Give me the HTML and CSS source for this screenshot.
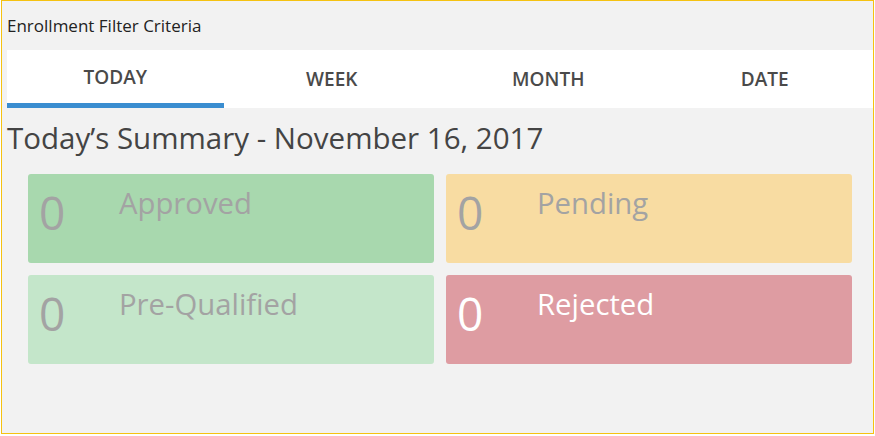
FILE: index.html
```html
<!DOCTYPE html>
<html>
<head>
<meta charset="utf-8">
<link rel="stylesheet" href="styles.css">
</head>
<body>
<div class="frame">
  <div class="panel-title">Enrollment Filter Criteria</div>
  <div class="tabs">
    <div class="tab active">TODAY</div>
    <div class="tab">WEEK</div>
    <div class="tab">MONTH</div>
    <div class="tab">DATE</div>
  </div>
  <h1 class="summary">Today’s Summary - November 16, 2017</h1>
  <div class="cards">
    <div class="card approved"><span class="num">0</span><span class="label">Approved</span></div>
    <div class="card pending"><span class="num">0</span><span class="label">Pending</span></div>
    <div class="card prequal"><span class="num">0</span><span class="label">Pre-Qualified</span></div>
    <div class="card rejected"><span class="num">0</span><span class="label">Rejected</span></div>
  </div>
</div>
</body>
</html>
```

FILE: styles.css
```css
html, body {
  margin: 0;
  padding: 0;
  background: #ffffff;
}

body {
  font-family: "Open Sans", "Liberation Sans", sans-serif;
}

.frame {
  box-sizing: border-box;
  margin-left: 1px;
  width: 873px;
  height: 434px;
  border: 1px solid #f5c211;
  background: #f2f2f2;
  padding: 0 0 0 5px;
}

.panel-title {
  padding-top: 14px;
  font-size: 17px;
  line-height: 22px;
  color: #222222;
}

.tabs {
  margin-top: 13px;
  display: grid;
  grid-template-columns: repeat(4, 1fr);
  background: #ffffff;
  height: 58px;
}

.tab {
  box-sizing: border-box;
  height: 58px;
  display: flex;
  align-items: center;
  justify-content: center;
  font-size: 19px;
  font-weight: 600;
  color: #4a4a4a;
}

.tab.active {
  border-bottom: 5px solid #3a8dd0;
}

.summary {
  margin: 11px 0 0 0;
  font-size: 29.5px;
  line-height: 38px;
  font-weight: 400;
  color: #444444;
}

.cards {
  margin-top: 17px;
  padding-left: 21px;
  display: grid;
  grid-template-columns: 406px 406px;
  grid-auto-rows: 89px;
  gap: 12px;
}

.card {
  border-radius: 3px;
  display: flex;
  align-items: flex-start;
  padding-left: 11px;
  color: #a3a3a3;
}

.num {
  width: 80px;
  flex: none;
  font-size: 46px;
  line-height: 46px;
  padding-top: 15px;
}

.label {
  font-size: 29.3px;
  line-height: 28px;
  margin-top: 15px;
}

.approved { background: #a8d8ae; }
.pending { background: #f8dca2; }
.prequal { background: #c4e6ca; }
.rejected { background: #de9ca2; color: #ffffff; }
```
